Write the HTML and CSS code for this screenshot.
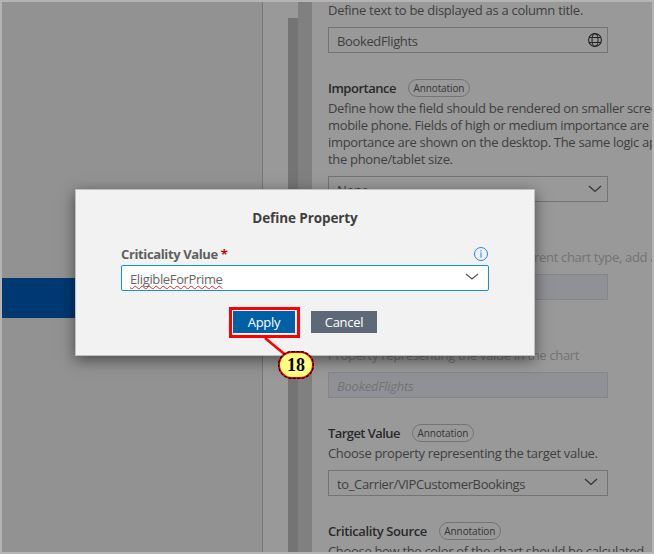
FILE: index.html
```html
<!DOCTYPE html>
<html lang="en">
<head>
<meta charset="utf-8">
<title>Define Property</title>
<link rel="stylesheet" href="styles.css">
</head>
<body>
<div class="frame">
  <div class="canvas"><div class="selected-row"></div></div>
  <div class="gutter"><div class="thumb"></div></div>
  <div class="splitter"></div>
  <main class="properties">
    <section class="field">
      <p class="desc"><span class="t1">Define text to be displayed as a column title.</span></p>
      <div class="control"><span class="v1">BookedFlights</span>
        <svg class="globe" viewBox="0 0 16 16"><circle cx="8" cy="8" r="6.4"/><ellipse cx="8" cy="8" rx="3" ry="6.4"/><path d="M2.3 5.5h11.4M2.3 10.5h11.4"/></svg>
      </div>
    </section>
    <section class="field">
      <div class="label"><b class="l1">Importance</b><span class="badge">Annotation</span></div>
      <p class="desc"><span>Define how the field should be rendered on smaller scree</span><span>mobile phone. Fields of high or medium importance are</span><span>importance are shown on the desktop. The same logic ap</span><span>the phone/tablet size.</span></p>
      <div class="control"><span>None</span><svg class="chevron" viewBox="0 0 14 8"><path d="M1 1l6 5.5L13 1"/></svg></div>
    </section>
    <section class="field disabled">
      <div class="label"></div>
      <p class="desc trailing"><span>rent chart type, add a</span></p>
      <div class="control"></div>
    </section>
    <section class="field disabled">
      <div class="label"></div>
      <p class="desc"><span>Property representing the value in the chart</span></p>
      <div class="control"><i>BookedFlights</i></div>
    </section>
    <section class="field">
      <div class="label"><b class="l2">Target Value</b><span class="badge">Annotation</span></div>
      <p class="desc"><span>Choose property representing the target value.</span></p>
      <div class="control"><span class="v3">to_Carrier/VIPCustomerBookings</span><svg class="chevron far" viewBox="0 0 14 8"><path d="M1 1l6 5.5L13 1"/></svg></div>
    </section>
    <section class="field">
      <div class="label"><b class="l3">Criticality Source</b><span class="badge">Annotation</span></div>
      <p class="desc"><span>Choose how the color of the chart should be calculated.</span></p>
    </section>
  </main>
</div>

<div class="dialog" role="dialog">
  <h1><span>Define Property</span></h1>
  <div class="dialog-label"><b>Criticality Value</b><em>*</em>
    <svg class="info" viewBox="0 0 16 16"><circle cx="8" cy="8" r="6.5"/><path d="M8 4v1.4M8 6.3v5.4"/></svg>
  </div>
  <div class="combo"><span>EligibleForPrime</span><svg class="chevron" viewBox="0 0 14 8"><path d="M1 1l6 5L13 1"/></svg></div>
  <div class="actions">
    <div class="button primary"><span>Apply</span></div>
    <div class="button"><span>Cancel</span></div>
  </div>
</div>
<div class="highlight"></div>
<svg class="pointer" viewBox="0 0 40 30"><path d="M5 3L28 22"/></svg>
<div class="step">
  <svg viewBox="0 0 36 28"><rect class="ring" x="1" y="1" width="34" height="26" rx="13"/><rect class="dash" x=".6" y=".6" width="34.8" height="26.8" rx="13.4"/></svg>
  <span>18</span>
</div>
</body>
</html>
```
FILE: styles.css
```css
* { box-sizing: border-box; }
body {
  margin: 0;
  width: 654px;
  height: 554px;
  overflow: hidden;
  position: relative;
  font: 13px/17px "Open Sans", "Noto Sans", sans-serif;
  color: #3f3f3f;
}
span, b, i { white-space: nowrap; }
.frame {
  display: flex;
  width: 654px;
  height: 554px;
  border: 2px solid #b4b4b4;
  background: #999;
  overflow: hidden;
}
.canvas { width: 261px; flex: none; background: #929292; border-right: 1px solid #777; padding-top: 276px; }
.selected-row { height: 40px; background: #003972; }
.gutter { width: 35px; flex: none; padding: 16px 0 0 25px; }
.thumb { height: 100%; background: #747474; }
.splitter { width: 14px; flex: none; background: #808080; }
.properties { flex: 1; min-width: 0; padding-left: 16px; overflow: hidden; }
.field { margin-bottom: 26px; }
.label { display: flex; align-items: center; height: 18px; margin-bottom: 3px; color: #292929; }
.label b { font-weight: 600; }
.l1 { letter-spacing: -0.5px; }
.l2 { letter-spacing: -0.57px; }
.l3 { letter-spacing: -0.39px; }
.badge {
  height: 18px;
  width: 62px;
  margin-left: 12px;
  border: 1px solid #747474;
  border-radius: 9px;
  text-align: center;
  font-size: 10px;
  line-height: 17px;
  letter-spacing: -0.1px;
  color: #353535;
}
.desc { margin: 0 0 8px; white-space: nowrap; }
.desc span { display: block; letter-spacing: -0.32px; }
.desc .t1 { letter-spacing: -0.28px; }
.desc.trailing { padding-left: 206px; }
.control {
  display: flex;
  align-items: center;
  justify-content: space-between;
  width: 280px;
  height: 26px;
  border: 1px solid #747474;
  padding: 2px 5px 0 8px;
  letter-spacing: -0.36px;
}
.chevron { width: 14px; height: 8px; fill: none; stroke: #333; stroke-width: 1.2; margin: -2px 0 0 0; }
.chevron.far { margin: -4px 4px 0 0; }
.globe { width: 16px; height: 16px; margin-top: -2px; margin-right: -1px; fill: none; stroke: #242424; stroke-width: 1.1; }
.disabled { color: #737373; }
.disabled .control { background: #909196; border-color: #868686; }
.disabled i { letter-spacing: -0.25px; }

.dialog {
  position: absolute;
  left: 75px;
  top: 189px;
  width: 460px;
  height: 167px;
  border: 1px solid #c0c0c0;
  background: #f2f2f2;
  box-shadow: 0 4px 14px rgba(0, 0, 0, .5);
  padding: 19px 45px 0;
}
.dialog h1 { margin: 0; font-size: 13.5px; line-height: 18px; font-weight: 700; text-align: center; color: #404040; letter-spacing: -0.1px; }
.dialog-label { display: flex; align-items: center; height: 18px; margin: 18px 0 2px; color: #606060; letter-spacing: -0.37px; }
.dialog-label em { color: #d00000; font-style: normal; font-weight: 700; margin-left: 3px; }
.info { width: 16px; height: 16px; margin-left: auto; fill: none; stroke: #2684ee; stroke-width: 1; }
.combo {
  display: flex;
  align-items: center;
  justify-content: space-between;
  height: 26px;
  background: #fff;
  border: 1px solid #128ee8;
  border-radius: 2px;
  padding: 2px 9px 0 8px;
  color: #666;
}
.combo span { text-decoration: underline wavy #f02020 1px; text-underline-offset: 1px; text-decoration-skip-ink: none; letter-spacing: -0.36px; }
.combo .chevron { stroke: #555; margin-top: -4px; }
.actions { display: flex; gap: 16px; margin: 20px 0 0 112px; }
.button { width: 66px; height: 22px; background: #5e6977; color: #fff; text-align: center; line-height: 23px; letter-spacing: -0.3px; }
.primary { width: 62px; background: #0060a5; }
.highlight { position: absolute; left: 229px; top: 307px; width: 71px; height: 31px; border: 3px solid #f00; }
.pointer { position: absolute; left: 260px; top: 335px; width: 40px; height: 30px; fill: none; stroke: #f00; stroke-width: 2.6; }
.step {
  position: absolute;
  left: 278px;
  top: 351px;
  width: 36px;
  height: 28px;
  color: #000;
  font: bold 18px/28px "Liberation Serif", serif;
  text-align: center;
}
.step svg { position: absolute; inset: 0; width: 36px; height: 28px; }
.step span { position: relative; }
.ring { fill: #ffff80; stroke: #f00; stroke-width: 2; }
.dash { fill: none; stroke: #000; stroke-width: 1.2; stroke-dasharray: 3 1.5; }
```
